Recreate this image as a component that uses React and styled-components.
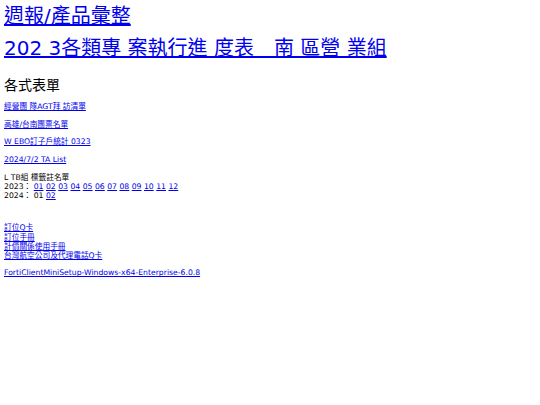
import React from "react";
import styled, { createGlobalStyle } from "styled-components";

const Global = createGlobalStyle`
  html, body { margin: 0; padding: 0; background: #ffffff; }
  body { font-family: "DejaVu Sans", "Noto Sans CJK TC", sans-serif; color: #000; }
`;

const Page = styled.div`
  padding: 0 4px;
`;

const TitleBlock = styled.div`
  font-size: 20px;
  line-height: 32px;
`;

const Link = styled.a`
  color: #0000ee;
  text-decoration: underline;
`;

const SectionTitle = styled.h2`
  font-size: 14px;
  font-weight: normal;
  margin: 12.5px 0 8.7px;
  line-height: 17px;
`;

const Para = styled.p`
  font-size: 7.7px;
  line-height: 9.3px;
  margin: 0 0 ${(p) => p.$after ?? 8.3}px;
`;

const months = ["01","02","03","04","05","06","07","08","09","10","11","12"];

export default function App() {
  return (
    <Page>
      <Global />
      <TitleBlock>
        <Link href="#">週報/產品彙整</Link>
        <br />
        <Link href="#">202 3各類專 案執行進 度表　南 區營 業組</Link>
      </TitleBlock>
      <SectionTitle>各式表單</SectionTitle>
      <Para><Link href="#">經營團 隊AGT拜 訪清單</Link></Para>
      <Para><Link href="#">高雄/台南團票名單</Link></Para>
      <Para><Link href="#">W EBO訂子戶統計 0323</Link></Para>
      <Para><Link href="#">2024/7/2 TA List</Link></Para>
      <Para $after={23}>
        L TB組 標籤註名單
        <br />
        2023：{months.map((m) => (
          <React.Fragment key={m}> <Link href="#">{m}</Link></React.Fragment>
        ))}
        <br />
        2024： 01 <Link href="#">02</Link>
      </Para>
      <Para $after={7.6}>
        <Link href="#">訂位Q卡</Link>
        <br />
        <Link href="#">訂位手冊</Link>
        <br />
        <Link href="#">計價關係使用手冊</Link>
        <br />
        <Link href="#">台灣航空公司及代理電話Q卡</Link>
      </Para>
      <Para><Link href="#">FortiClientMiniSetup-Windows-x64-Enterprise-6.0.8</Link></Para>
    </Page>
  );
}
